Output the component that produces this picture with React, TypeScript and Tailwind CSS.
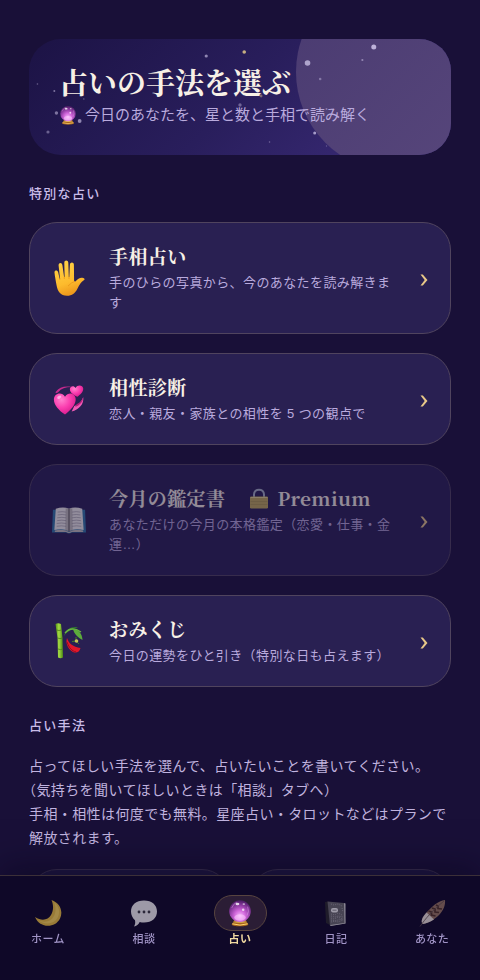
import React from 'react';

const serif = "font-['Noto_Serif_CJK_JP','DejaVu_Serif','Noto_Sans_CJK_JP',serif]";

function CrystalBall({ className }: { className?: string }) {
  return (
    <svg viewBox="0 0 36 44" className={className} aria-hidden="true">
      <defs>
        <radialGradient id="ball" cx="50%" cy="72%" r="70%">
          <stop offset="0" stopColor="#f6b6fb" />
          <stop offset="0.35" stopColor="#d268dc" />
          <stop offset="0.7" stopColor="#8c3aa0" />
          <stop offset="1" stopColor="#4c1c66" />
        </radialGradient>
        <linearGradient id="stand" x1="0" x2="1">
          <stop offset="0" stopColor="#8a5214" />
          <stop offset="0.5" stopColor="#ffd873" />
          <stop offset="1" stopColor="#95560f" />
        </linearGradient>
      </defs>
      <path d="M9 33h18l4 7q-13 5-26 0z" fill="url(#stand)" />
      <ellipse cx="18" cy="40" rx="13" ry="3" fill="#a8651b" />
      <path d="M6 39q12 4 24 0" fill="none" stroke="#ffd772" strokeWidth="1.5" />
      <circle cx="18" cy="19" r="17" fill="url(#ball)" />
      <ellipse cx="14" cy="8" rx="3" ry="2" fill="#fff" opacity="0.8" />
      <ellipse cx="24" cy="8" rx="2" ry="1.4" fill="#fff" opacity="0.6" />
      <circle cx="23" cy="17" r="2" fill="#fff" opacity="0.7" />
      <path d="M5 14q3-7 8-9M30 12q3 8-1 14" fill="none" stroke="#dc9ee9" strokeWidth="1.2" opacity="0.7" />
      <ellipse cx="18" cy="29" rx="9" ry="5" fill="#ffd0ff" opacity="0.55" />
    </svg>
  );
}

function Hand() {
  return (
    <svg viewBox="0 0 31 36" className="h-9 w-[31px]" aria-hidden="true">
      <defs>
        <linearGradient id="skin" x1="0" y1="0" x2="0.3" y2="1">
          <stop offset="0" stopColor="#ffd54a" />
          <stop offset="0.7" stopColor="#fdbb2d" />
          <stop offset="1" stopColor="#ee9a1d" />
        </linearGradient>
      </defs>
      <path
        d="M2.500 25C1.600 20 .9 16.500.5 12.600.2 9.900 3.600 9.600 4.100 12.100L5.700 19h.4L4.600 5.600C4.400 2.500 8 2.200 8.400 5.200L10.100 17h.5L10.300 2.800c0-3.200 3.900-3.200 4 0l.5 14.200h.5l.6-12.300c.2-3 4-2.900 4 .1l.2 15.700c.1 1.300 1 1.200 1.800.4 1.700-1.900 3.700-3.300 6.400-3.100 1.700.1 3 1.300 1.800 2.200-3.400 1.900-4.700 5-6.700 8.800C21 33.500 18.200 35.800 13 35.800 6.500 35.800 3.600 31.500 2.500 25z"
        fill="url(#skin)"
      />
      <path d="M5.700 18v2M10.300 16.500v2.500M15 16.500v2.500M14 26q4-4 6.500-4.500" fill="none" stroke="#e58e14" strokeWidth="0.8" opacity="0.8" />
    </svg>
  );
}

function Hearts() {
  return (
    <svg viewBox="0 0 36 36" className="h-8 w-8" aria-hidden="true">
      <defs>
        <radialGradient id="heart" cx="35%" cy="30%" r="75%">
          <stop offset="0" stopColor="#ff82ce" />
          <stop offset="0.5" stopColor="#fb3fb0" />
          <stop offset="1" stopColor="#d81a8c" />
        </radialGradient>
      </defs>
      <path d="M3 10C7 5 13 3 21 4.500c-7 0-12 2-15 5.500-1.500 1.500-3.500 1.500-3 0z" fill="#c52a8e" />
      <path d="M34 16c1 8-5 14-13 16l3-6c5-2 8-5 10-10z" fill="#f25bb7" />
      <path d="M34 16c0 5-4 9-9 11l1.500-3c4-2 6-4 7.500-8z" fill="#b71d7c" />
      <path d="M27.500 15.500c-4-2-8-4.500-8.500-8-.4-3.500 4-5.500 6.500-2 2-4.200 8.300-3.300 8.500.8.200 4-3.500 7-6.500 9.200z" fill="url(#heart)" />
      <path d="M13.500 35.500C7 31 1 25 1 18.500 1 11.500 10 9 13.500 15.500 17.500 9 26 11.500 25.500 19c-.5 6.500-6 11.500-12 16.500z" fill="url(#heart)" />
      <ellipse cx="7" cy="16" rx="2.500" ry="1.500" fill="#ffc1e8" opacity="0.8" transform="rotate(-30 7 16)" />
    </svg>
  );
}

function Book() {
  return (
    <svg viewBox="0 0 36 30" className="w-[34px]" aria-hidden="true">
      <path d="M1 4h34l1 24H21q-3 2-6 0H0z" fill="#2f78a8" />
      <path d="M2.500 25.500L4 3q8-3 14 0 6-3 14 0l1.500 22.500q-9-2-15.500 1-6.500-3-15.500-1z" fill="#f6f3ee" />
      <path d="M14.500 2.500L18 3l3.500-.5L22 26l-4 1-4-1z" fill="#a7a39f" opacity="0.6" />
      <path d="M18 3v24" stroke="#4b4848" strokeWidth="1" />
      <path d="M3 26q9-2 15 1.500Q24 24 33 26v1.500H21q-3 2-6 0H3z" fill="#c9c4bd" />
      <path
        d="M6 6.500q5-1 9 0M6 9.500q5-1 9 0M5.500 12.500q5-1 9.500 0M5.500 15.500q5-1 9.500 0M5 18.500q5-1 10 0M5 21.500q5-1 10 0M21 6.500q5-1 9 0M21 9.500q5-1 9 0M21 12.500q5-1 9.500 0M21 15.500q5-1 9.500 0M21 18.500q5-1 10 0M21 21.500q5-1 10 0"
        fill="none"
        stroke="#918e98"
        strokeWidth="0.6"
      />
    </svg>
  );
}

function Kadomatsu() {
  return (
    <svg viewBox="0 0 28 36" className="h-9 w-7" aria-hidden="true">
      <defs>
        <linearGradient id="bamboo" x1="0" x2="1">
          <stop offset="0" stopColor="#4f8f12" />
          <stop offset="0.45" stopColor="#a5dc45" />
          <stop offset="1" stopColor="#4c8b14" />
        </linearGradient>
      </defs>
      <path d="M.5 1q2.500-1.500 5.500 0L7.500 15 8 34.500q-2.500 1.500-5 0L2.500 15z" fill="url(#bamboo)" />
      <path d="M1.500 7q2.500 1 5 0M2.500 15q2.500 1.200 5 0M3 26q2.500 1.200 5 0" fill="none" stroke="#4a7f16" strokeWidth="0.8" />
      <path d="M9 13C11 6 17 3 23 4.500 18 6 13 7.500 9 13z" fill="#2f7431" />
      <path d="M10 10C14 5 20 5 26 9" fill="none" stroke="#6bb543" strokeWidth="1.400" />
      <path d="M18 6c5 0 9 4 9.500 11C23 14.500 19 11 18 6z" fill="#5cab3c" />
      <path d="M12 15c2 6 6 8.500 13.500 10-1 4-4 5.500-7.500 4C14 27 10 21 12 15z" fill="#e2172a" />
      <path d="M12 19c2 6 5 9 9 10" fill="none" stroke="#980d22" strokeWidth="1" />
      <path d="M17 18.500l4-.5M21 14v4M21 18l3 3" stroke="#3f7f25" strokeWidth="1" />
      <circle cx="21.500" cy="18" r="1.800" fill="#c9c05a" />
    </svg>
  );
}

function Lock() {
  return (
    <svg viewBox="0 0 20 22" className="h-[22px] w-5" aria-hidden="true">
      <path d="M5 12V7.500C5 1 15 1 15 7.500V12" fill="none" stroke="#a9b4c6" strokeWidth="2" />
      <rect x="1" y="9.500" width="18" height="12" rx="1.200" fill="#c2ab58" />
      <path d="M1.500 10.500h17" stroke="#e6d78f" />
      <path d="M1.500 14.500h17M1.500 17.500h17" stroke="#a8934a" strokeWidth="0.600" />
    </svg>
  );
}

function Moon() {
  return (
    <svg viewBox="0 0 28 28" className="h-7 w-7" aria-hidden="true">
      <path d="M17.500 1C26 4 29.500 12 26 19.500 21.500 29 6 30 1 18c7 4.500 13 3 16-2 2.500-4.500 2.800-9.500.5-15z" fill="#d4ac3e" />
      <path d="M20 3c5 4 6.500 10 4 15-4 8-14 8-20 3 6 3 13 2 16-4 2.500-5 1.500-10 0-14z" fill="#f1d46b" opacity="0.500" />
    </svg>
  );
}

function Bubble() {
  return (
    <svg viewBox="0 0 28 28" className="h-7 w-7" aria-hidden="true">
      <path d="M14 1.500c8 0 13 4.500 13 11s-5 11-13 11c-1.500 0-3-.1-4.300-.5-1.200 2.500-3.200 4-5.700 4.500 1.200-2 1.500-3.800 1-6.300C2.500 19 1 16 1 12.500c0-6.500 5-11 13-11z" fill="#d9d7de" />
      <circle cx="9" cy="13" r="1.400" fill="#373541" />
      <circle cx="14" cy="13" r="1.400" fill="#373541" />
      <circle cx="19" cy="13" r="1.400" fill="#373541" />
    </svg>
  );
}

function Notebook() {
  return (
    <svg viewBox="0 0 28 28" className="h-7 w-7" aria-hidden="true">
      <path d="M3 3l3.500-.5L8 26l-4-2z" fill="#26252b" />
      <path d="M5.500 2.500L22 4l1.500 20.500L8 27z" fill="#605e66" />
      <path d="M22 4l1.500.5v20l-15 2.500v-1l14-2z" fill="#c3c1c6" />
      <path
        d="M9 5l3 1 4-1 4 2M9 15l4 1 3-2 4 2M9 17l4 1 3-1 5 1M9 19l3 1 4-2 4 2M9 21l4 1 3-1 5-1M9 23l4-1 3 1 5-2M20 9l1 4"
        fill="none"
        stroke="#a3a1aa"
        strokeWidth="0.7"
        strokeDasharray="1 1.200"
      />
      <rect x="9" y="9" width="7" height="4.500" rx="2" fill="#d9d8de" />
      <path d="M10.500 11.200h4" stroke="#6e6c74" strokeWidth="0.800" />
    </svg>
  );
}

function Feather() {
  return (
    <svg viewBox="0 0 28 28" className="h-7 w-7" aria-hidden="true">
      <path d="M27 1c.6 5-1.500 10-5.500 14.500C17 20 11 24 4.500 25 2.500 22 4.500 18 9 13 14 7.500 20 2 27 1z" fill="#8a6a5c" />
      <path d="M4.500 25C2.500 22 4.500 18 8.500 13.500l7.500 7C12 23 8 24.500 4.500 25z" fill="#d3c8c6" />
      <path d="M10.500 12l3 1v3l4 1M14 9l3 1v3l4 .5M18 6l2 1v2.500l4 .5" fill="none" stroke="#4b2f29" strokeWidth="1.700" />
      <path d="M2 27.500C7 20 15 11 26 2" fill="none" stroke="#5b4a4b" strokeWidth="0.8" />
    </svg>
  );
}

function Chevron() {
  return (
    <svg viewBox="0 0 8 12" className="mt-1 mr-px h-3 w-2 shrink-0" aria-hidden="true">
      <path d="M.5.500h2.300L7.500 6l-4.700 5.500H.5L4.700 6z" fill="#e8c888" />
    </svg>
  );
}

// cx is in percent of the banner width, cy in pixels
const stars = [
  { cx: '2%', cy: 45, r: 0.8, o: 0.4 },
  { cx: '6%', cy: 52, r: 1, o: 0.5 },
  { cx: '42%', cy: 17, r: 1.6, o: 0.6 },
  { cx: '51%', cy: 13, r: 1.8, o: 0.8, gold: true },
  { cx: '13%', cy: 60, r: 0.7, o: 0.4 },
  { cx: '6.500%', cy: 74, r: 1.7, o: 0.5 },
  { cx: '12%', cy: 82, r: 1.9, o: 0.6 },
  { cx: '4.500%', cy: 93, r: 1.6, o: 0.4 },
  { cx: '50%', cy: 66, r: 1.7, o: 0.4 },
  { cx: '66%', cy: 24, r: 2.8, o: 0.7 },
  { cx: '81.700%', cy: 8, r: 2.5, o: 0.8 },
  { cx: '79%', cy: 21, r: 1.1, o: 0.5 },
  { cx: '69%', cy: 40, r: 1.3, o: 0.4 },
  { cx: '55%', cy: 57, r: 1.4, o: 0.4, gold: true },
  { cx: '67.700%', cy: 94, r: 1.5, o: 0.7 },
  { cx: '57%', cy: 103, r: 0.8, o: 0.4 },
  { cx: '70.500%', cy: 107, r: 0.7, o: 0.3 },
  { cx: '70.500%', cy: 70, r: 1, o: 0.4 },
];

const specials = [
  { icon: <Hand />, title: '手相占い', desc: '手のひらの写真から、今のあなたを読み解きます' },
  { icon: <Hearts />, title: '相性診断', desc: '恋人・親友・家族との相性を 5 つの観点で' },
  { icon: <Book />, title: '今月の鑑定書', desc: 'あなただけの今月の本格鑑定（恋愛・仕事・金運…）', premium: true },
  { icon: <Kadomatsu />, title: 'おみくじ', desc: '今日の運勢をひと引き（特別な日も占えます）' },
];

const tabs = [
  { label: 'ホーム', icon: <Moon /> },
  { label: '相談', icon: <Bubble /> },
  { label: '占い', icon: <CrystalBall className="h-7 w-6" />, active: true },
  { label: '日記', icon: <Notebook /> },
  { label: 'あなた', icon: <Feather /> },
];

function SectionTitle({ children }: { children: React.ReactNode }) {
  return <h2 className="mt-[29px] mb-[18px] text-[13px] leading-5 font-medium tracking-widest text-[#c9bce8]">{children}</h2>;
}

export default function App() {
  return (
    <div
      lang="ja"
      className="min-h-screen bg-[#191038] font-['Liberation_Sans','Noto_Sans_CJK_JP',sans-serif] tracking-wide text-[#b9aadd] [text-spacing-trim:trim-start]"
    >
      <main className="px-[29px] pt-[39px]">
        {/* Banner */}
        <header className="relative overflow-hidden rounded-[32px] bg-linear-135 from-[#1c1345] via-[#291e5c] to-[#3d2d7c] px-[30px] pt-6 pb-7">
          <div className="absolute -top-[67px] -right-[45px] h-[200px] w-[200px] rounded-full bg-linear-135 from-[#493a70] to-[#58477c]" />
          <svg className="absolute inset-0 h-full w-full" aria-hidden="true">
            {stars.map((s, i) => (
              <circle key={i} cx={s.cx} cy={s.cy} r={s.r} opacity={s.o} fill={s.gold ? '#f0d58c' : '#d9d0f2'} />
            ))}
          </svg>
          <div className="relative">
            <h1 className={`${serif} text-[29px] leading-[38px] font-bold tracking-normal text-[#f7f0e6]`}>占いの手法を選ぶ</h1>
            <p className="mt-[2px] flex items-center gap-2 text-[15px] leading-6 tracking-normal">
              <CrystalBall className="h-5 w-[18px]" />
              今日のあなたを、星と数と手相で読み解く
            </p>
          </div>
        </header>

        {/* Special readings */}
        <SectionTitle>特別な占い</SectionTitle>
        <div className="flex flex-col gap-[19px]">
          {specials.map((item) => (
            <button
              key={item.title}
              type="button"
              className={`flex w-full items-center gap-[22px] rounded-[28px] border border-[#50445e] bg-[#292052] px-[21px] py-5 text-left tracking-wide ${item.premium ? 'opacity-55' : ''}`}
            >
              <span className="flex w-9 shrink-0 justify-center">{item.icon}</span>
              <span className="flex-1">
                <span className={`${serif} flex items-center text-[19px] leading-[25px] font-bold text-[#f7f0e6]`}>
                  {item.title}
                  {item.premium && (
                    <span className="ml-6 flex items-center gap-2">
                      <Lock />
                      Premium
                    </span>
                  )}
                </span>
                <span className="mt-[5px] block text-[13px] leading-5">{item.desc}</span>
              </span>
              <Chevron />
            </button>
          ))}
        </div>

        {/* Methods */}
        <SectionTitle>占い手法</SectionTitle>
        <p className="text-sm leading-6 text-[#c0b3df]">
          占ってほしい手法を選んで、占いたいことを書いてください。
          <br />
          （気持ちを聞いてほしいときは「相談」タブへ）
          <br />
          手相・相性は何度でも無料。星座占い・タロットなどはプランで解放されます。
        </p>
        <div className="mt-[19px] grid grid-cols-2 gap-5">
          <div className="h-20 rounded-[28px] border border-[#3a2f50] bg-[#1f1744]" />
          <div className="h-20 rounded-[28px] border border-[#3a2f50] bg-[#1f1744]" />
        </div>
      </main>

      {/* Tab bar */}
      <nav className="fixed inset-x-0 bottom-0 grid grid-cols-5 border-t border-[#3c3038] bg-[#0f0828] pt-[19px] pb-[33px] shadow-[0_-8px_32px_rgba(8,4,26,0.500)]">
        {tabs.map((tab) => (
          <a key={tab.label} href="#" aria-current={tab.active ? 'page' : undefined} className="flex flex-col items-center">
            <span
              className={`flex h-9 w-[53px] items-center justify-center rounded-full ${tab.active ? 'border border-[#57443f] bg-[#2b1d35]' : 'opacity-70'}`}
            >
              {tab.icon}
            </span>
            <span className={`text-[11px] leading-4 ${tab.active ? 'font-bold text-[#f0d9a0]' : 'font-medium text-[#a194c6]'}`}>
              {tab.label}
            </span>
          </a>
        ))}
      </nav>
    </div>
  );
}
